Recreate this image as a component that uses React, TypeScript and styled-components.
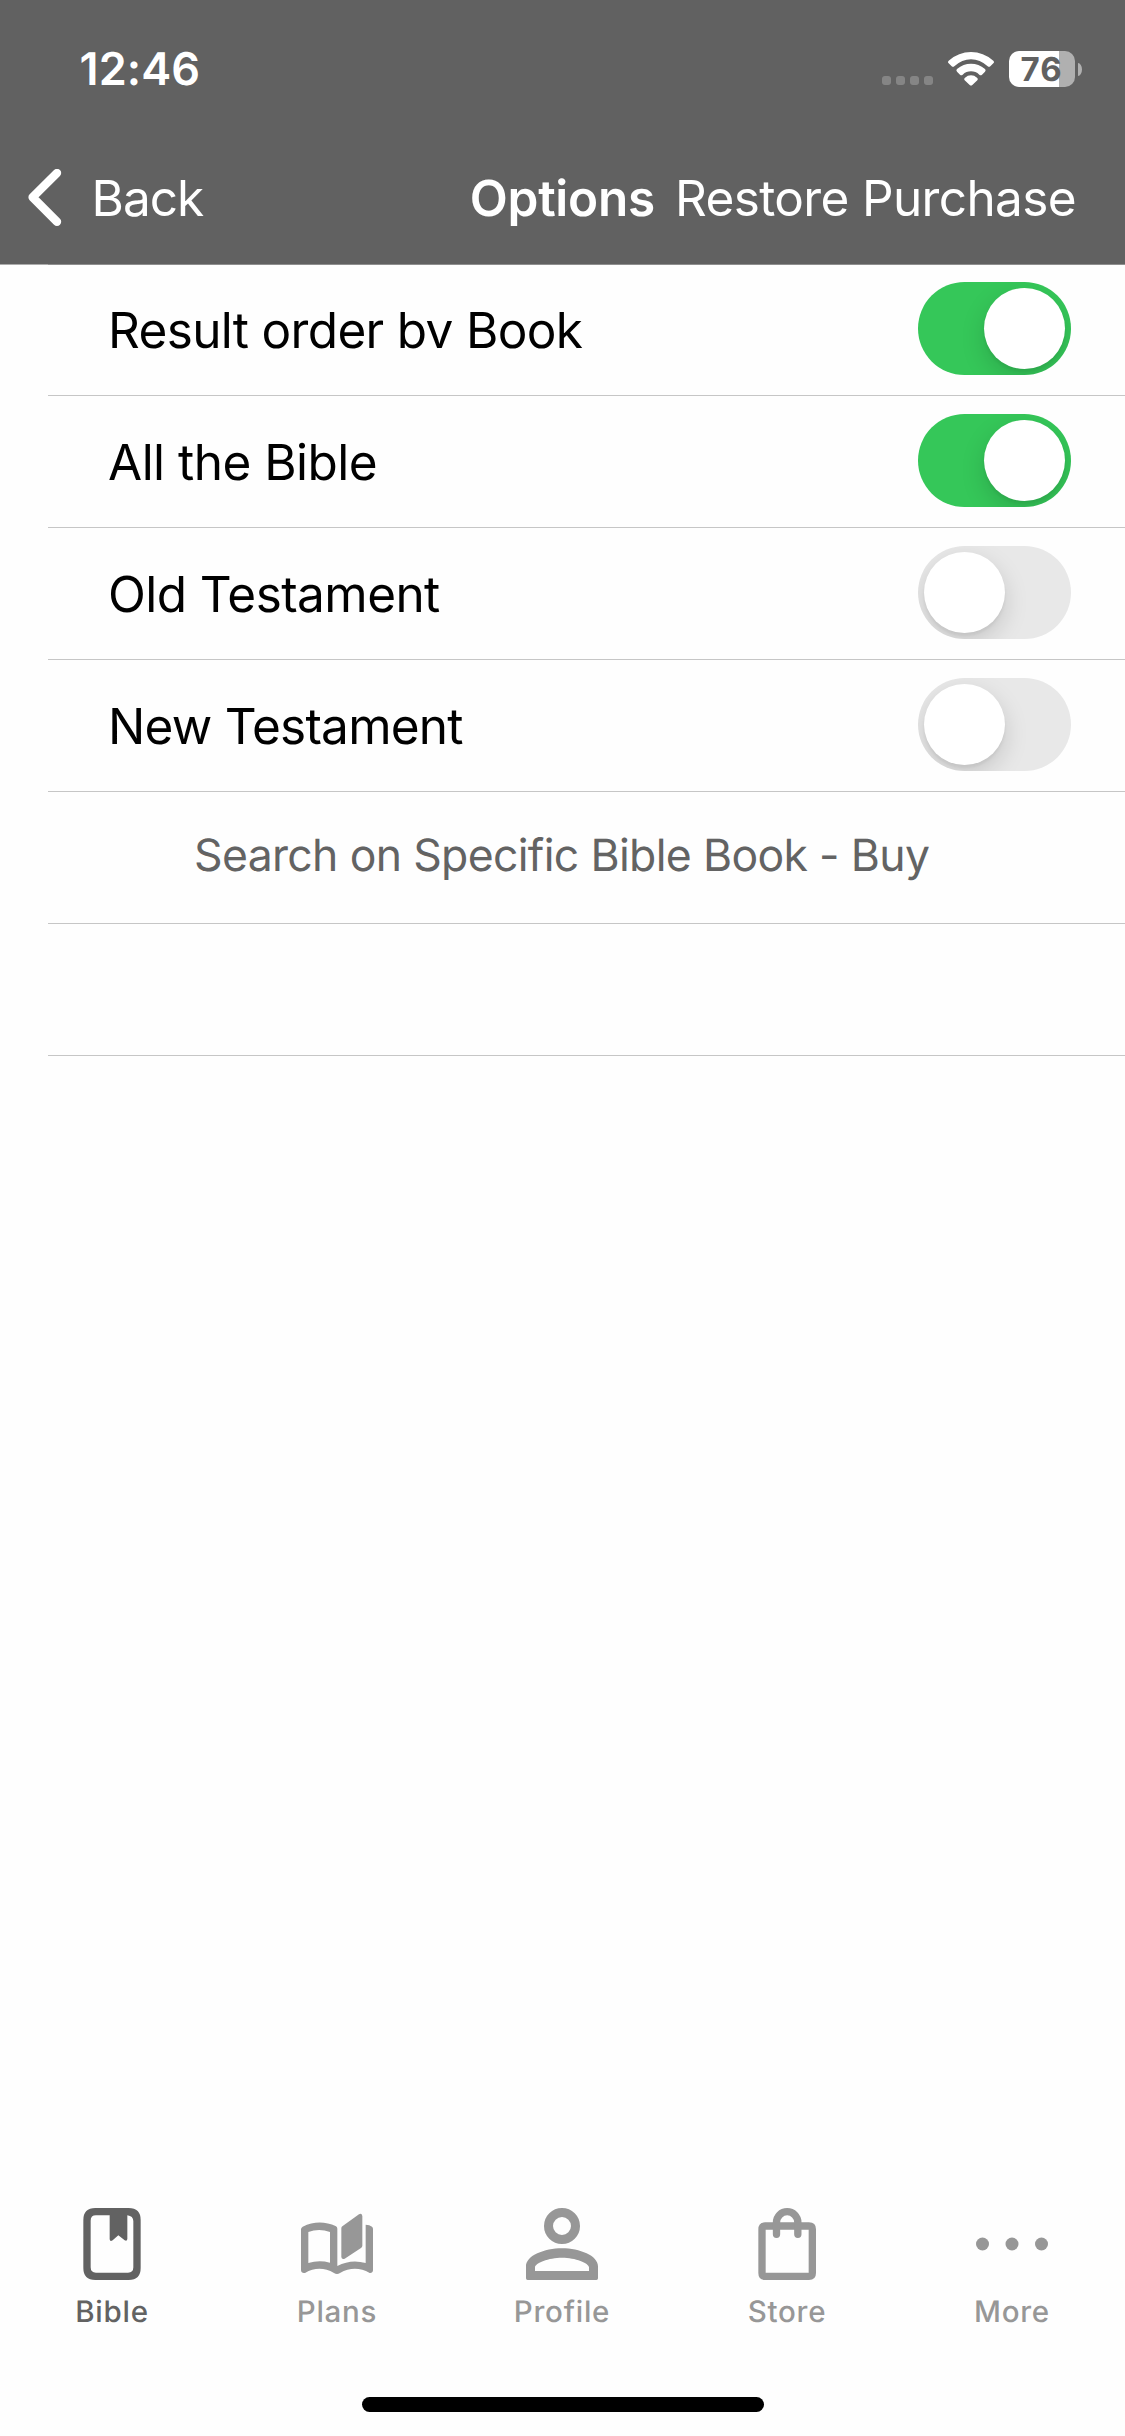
import React, { useState } from "react";
import styled, { createGlobalStyle } from "styled-components";

const GlobalStyle = createGlobalStyle`
  * { box-sizing: border-box; }
  body { margin: 0; background: #fefefe; }
`;

const Screen = styled.div`
  width: 1125px;
  height: 2436px;
  display: flex;
  flex-direction: column;
  background: #fefefe;
  color: #000;
  font-family: Inter, "Liberation Sans", sans-serif;
  text-rendering: geometricPrecision;
  overflow: hidden;
`;

const Header = styled.header`
  height: 264px;
  flex: none;
  background: #616161;
  color: #fff;
`;

const StatusBar = styled.div`
  height: 138px;
  padding: 0 43px 0 79.5px;
  display: flex;
  align-items: center;
`;

const Clock = styled.time`
  margin-right: auto;
  font-size: 45px;
  font-weight: 600;
  letter-spacing: 0.1px;
  line-height: 50px;
`;

const SignalDots = styled.div`
  display: flex;
  gap: 5px;
  margin: 23px 15px 0 0;
`;

const SignalDot = styled.i`
  width: 9px;
  height: 9px;
  border-radius: 3px;
  background: #858585;
`;

const WifiIcon = styled.svg`
  width: 46px;
  height: 34px;
  margin-right: 15px;
`;

const Battery = styled.div`
  display: flex;
  align-items: center;
  gap: 3px;
`;

const BatteryBody = styled.div`
  width: 66px;
  height: 36px;
  padding-left: 11.5px;
  border-radius: 10px;
  background: linear-gradient(90deg, #fff 50px, #b0b0b0 50px);
  color: #616161;
  font-size: 33px;
  font-weight: 700;
  line-height: 37px;
  letter-spacing: 1px;
`;

const BatteryCap = styled.div`
  width: 4px;
  height: 13px;
  border-radius: 0 4px 4px 0 / 0 6.5px 6.5px 0;
  background: #b0b0b0;
`;

const NavBar = styled.nav`
  height: 120px;
  padding: 0 49px 0 28px;
  display: flex;
  align-items: center;
  font-size: 49.5px;
  line-height: 60px;
`;

const PlainButton = styled.button`
  display: flex;
  align-items: center;
  padding: 0;
  border: 0;
  background: none;
  color: inherit;
  font: inherit;
  letter-spacing: -0.63px;
  white-space: nowrap;
`;

const BackButton = styled(PlainButton)`
  gap: 29.5px;
  letter-spacing: -1px;
`;

const Chevron = styled.svg`
  width: 34px;
  height: 58px;
`;

const Title = styled.h1`
  margin: 0 20px 0 auto;
  font-size: inherit;
  font-weight: 600;
  letter-spacing: -0.25px;
`;

const OptionList = styled.ul`
  flex: 1;
  margin: 0;
  padding: 0;
  list-style: none;
  background: linear-gradient(90deg, #acacac 48px, #8f8f8f 48px) top / 100% 1px no-repeat;
`;

const Row = styled.li`
  height: 132px;
  margin-left: 48px;
  padding: 0 54px 0 60px;
  display: flex;
  align-items: flex-start;
  justify-content: space-between;
  border-bottom: 1px solid #c6c6c6;
`;

const RowLabel = styled.span<{ $spacing: number }>`
  font-size: 49.5px;
  line-height: 132px;
  letter-spacing: ${(p) => p.$spacing}px;
  white-space: nowrap;
`;

const BuyLink = styled.span`
  margin-left: 86px;
  color: #636363;
  font-size: 44.5px;
  line-height: 126px;
  letter-spacing: -0.65px;
  white-space: nowrap;
`;

const Track = styled.button<{ $on: boolean }>`
  width: 153px;
  height: 93px;
  margin-top: 18px;
  padding: 6px;
  border: 0;
  border-radius: 46.5px;
  display: flex;
  justify-content: ${(p) => (p.$on ? "flex-end" : "flex-start")};
  background: ${(p) => (p.$on ? "#35c759" : "#e8e8e8")};
  overflow: hidden;
`;

const Knob = styled.span`
  width: 81px;
  height: 81px;
  border-radius: 50%;
  background: #fff;
  box-shadow: 0 9px 24px rgba(0, 0, 0, 0.15), 0 3px 3px rgba(0, 0, 0, 0.05);
`;

const TabBar = styled.nav`
  height: 207px;
  flex: none;
  padding-top: 18px;
  display: flex;
`;

const Tab = styled.a<{ $active?: boolean }>`
  flex: 1;
  padding-right: 1px;
  display: flex;
  flex-direction: column;
  align-items: center;
  gap: 12px;
  color: ${(p) => (p.$active ? "#626262" : "#979797")};
  font-size: 29.5px;
  font-weight: 500;
  line-height: 40px;
  letter-spacing: 0.75px;
`;

const TabIcon = styled.svg`
  width: 72px;
  height: 72px;
  overflow: visible;
`;

const HomeArea = styled.div`
  height: 39px;
  flex: none;
  display: flex;
  justify-content: center;
  align-items: flex-start;
`;

const HomeIndicator = styled.div`
  width: 402px;
  height: 15px;
  border-radius: 7.5px;
  background: #000;
`;

const tabs = [
  {
    name: "Bible",
    art: (
      <path
        fillRule="evenodd"
        d="M58 0H158Q194 0 194 36V180Q194 216 158 216H58Q22 216 22 180V36Q22 0 58 0ZM60 22Q44 22 44 38V178Q44 194 60 194H156Q172 194 172 178V40Q172 24 154 22V93Q153 101 146 97L127 82L110 97Q102 102 101 94V22Z"
      />
    ),
  },
  {
    name: "Plans",
    art: (
      <>
        <path
          fillRule="evenodd"
          d="M5 56Q55 32 105 55Q109 57 109 62V174Q150 152 194 165V50Q206 50 213 56Q216 59 216 63V187Q215 196 206 195Q162 170 117 195Q108 201 99 195Q55 170 12 195Q1 197 0 187V64Q0 59 5 56ZM22 72V165Q54 155 87 164V72Q54 60 22 72Z"
        />
        <path d="M124 55L174 19Q182 14 184 24V113Q184 117 180 120L131 152Q122 155 121 147V61Q121 57 124 55Z" />
      </>
    ),
  },
  {
    name: "Profile",
    art: (
      <>
        <circle cx="108" cy="54" r="40.5" fill="none" stroke="currentColor" strokeWidth="27" />
        <path
          fillRule="evenodd"
          d="M0 175C0 143 55 121 108 121S216 143 216 175V211Q216 216 211 216H5Q0 216 0 211ZM27 178V189H189V178C189 165 148 149 108 149S27 165 27 178Z"
        />
      </>
    ),
  },
  {
    name: "Store",
    art: (
      <>
        <path
          fillRule="evenodd"
          d="M42 43H174Q195 43 195 64V195Q195 216 174 216H43Q22 216 22 195V64Q22 43 42 43ZM44 65V194H173V65Z"
        />
        <path
          d="M76.5 79V43A32 32 0 0 1 140.5 43V79"
          fill="none"
          stroke="currentColor"
          strokeWidth="22"
          strokeLinecap="round"
        />
      </>
    ),
  },
  {
    name: "More",
    art: (
      <>
        <circle cx="19.5" cy="108" r="19.5" />
        <circle cx="108" cy="108" r="19.5" />
        <circle cx="196.5" cy="108" r="19.5" />
      </>
    ),
  },
];

const options = [
  { label: "Result order bv Book", on: true, spacing: -0.66 },
  { label: "All the Bible", on: true, spacing: -0.52 },
  { label: "Old Testament", on: false, spacing: -0.56 },
  { label: "New Testament", on: false, spacing: -0.76 },
];

export default function App() {
  const [values, setValues] = useState(options.map((o) => o.on));
  const toggle = (i: number) => setValues((v) => v.map((on, k) => (k === i ? !on : on)));

  return (
    <Screen>
      <GlobalStyle />
      <Header>
        <StatusBar>
          <Clock>12:46</Clock>
          <SignalDots>
            <SignalDot />
            <SignalDot />
            <SignalDot />
            <SignalDot />
          </SignalDots>
          <WifiIcon viewBox="0 0 138 102" fill="#fff">
            <path d="M2 26Q32 0 69 0T136 26Q140 30 136 34L127 43Q123 46 119 43Q96 22 69 22T19 43Q15 46 11 43L2 34Q-2 30 2 26Z" />
            <path d="M27 51Q46 35 69 35T111 51Q115 55 111 59L102 68Q98 71 94 68Q83 58 69 58T44 68Q40 71 36 68L27 59Q23 55 27 51Z" />
            <path d="M51 77Q59 70 69 70T87 77Q92 81 88 85L73 99Q69 102 65 99L50 85Q46 81 51 77Z" />
          </WifiIcon>
          <Battery>
            <BatteryBody>76</BatteryBody>
            <BatteryCap />
          </Battery>
        </StatusBar>
        <NavBar>
          <BackButton>
            <Chevron viewBox="0 0 34 58" fill="none" stroke="#fff" strokeWidth="8.4" strokeLinecap="round" strokeLinejoin="round">
              <path d="M29 4L4.6 28.3L29 52.8" />
            </Chevron>
            Back
          </BackButton>
          <Title>Options</Title>
          <PlainButton>Restore Purchase</PlainButton>
        </NavBar>
      </Header>

      <OptionList>
        {options.map((o, i) => (
          <Row key={o.label}>
            <RowLabel $spacing={o.spacing}>{o.label}</RowLabel>
            <Track $on={values[i]} role="switch" aria-checked={values[i]} onClick={() => toggle(i)}>
              <Knob />
            </Track>
          </Row>
        ))}
        <Row>
          <BuyLink>Search on Specific Bible Book - Buy</BuyLink>
        </Row>
        <Row />
      </OptionList>

      <TabBar>
        {tabs.map((t, i) => (
          <Tab key={t.name} $active={i === 0}>
            <TabIcon viewBox="0 0 216 216" fill="currentColor">
              {t.art}
            </TabIcon>
            {t.name}
          </Tab>
        ))}
      </TabBar>
      <HomeArea>
        <HomeIndicator />
      </HomeArea>
    </Screen>
  );
}
